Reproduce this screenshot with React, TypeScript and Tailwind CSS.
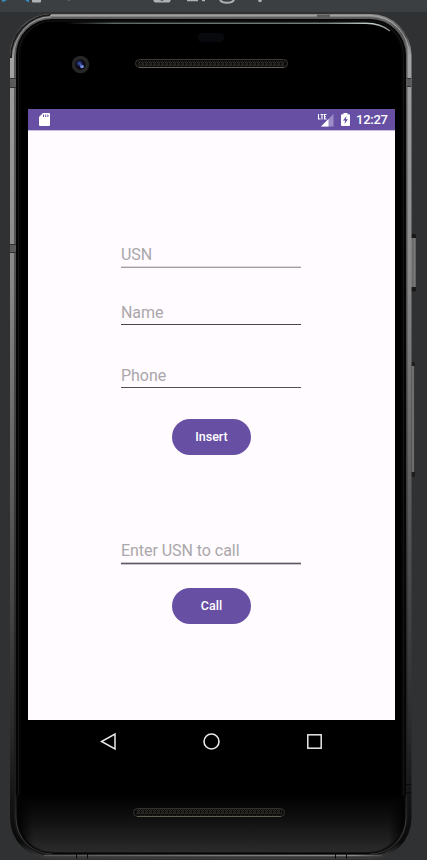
import React from "react";

function PhoneShell() {
  return (
    <svg className="absolute inset-0" width="427" height="860" viewBox="0 0 427 860" fill="none" aria-hidden="true">
      <defs>
        <linearGradient id="metal" x1="0" y1="14" x2="0" y2="859" gradientUnits="userSpaceOnUse">
          <stop offset="0" stopColor="#8c8c8c" />
          <stop offset="0.025" stopColor="#4a4a4a" />
          <stop offset="0.05" stopColor="#a5a5a5" />
          <stop offset="0.1" stopColor="#9c9c9c" />
          <stop offset="0.3" stopColor="#8a8a8a" />
          <stop offset="0.5" stopColor="#686868" />
          <stop offset="0.7" stopColor="#454545" />
          <stop offset="0.85" stopColor="#292929" />
          <stop offset="0.93" stopColor="#141414" />
          <stop offset="0.98" stopColor="#0a0a0a" />
          <stop offset="0.995" stopColor="#333333" />
          <stop offset="1" stopColor="#3a3a3a" />
        </linearGradient>
        <linearGradient id="edge" x1="0" y1="14" x2="0" y2="859" gradientUnits="userSpaceOnUse">
          <stop offset="0" stopColor="#5c5c5c" />
          <stop offset="0.3" stopColor="#525252" />
          <stop offset="0.8" stopColor="#222" />
          <stop offset="1" stopColor="#151515" />
        </linearGradient>
        <linearGradient id="chin" x1="0" y1="795" x2="0" y2="853" gradientUnits="userSpaceOnUse">
          <stop offset="0" stopColor="#000" />
          <stop offset="0.45" stopColor="#111" />
          <stop offset="1" stopColor="#2b2b2b" />
        </linearGradient>
        <linearGradient id="chinSides" x1="18" y1="0" x2="404" y2="0" gradientUnits="userSpaceOnUse">
          <stop offset="0" stopColor="#030303" />
          <stop offset="0.04" stopColor="#030303" stopOpacity="0" />
          <stop offset="0.96" stopColor="#030303" stopOpacity="0" />
          <stop offset="1" stopColor="#030303" />
        </linearGradient>
        <linearGradient id="rim" x1="0" y1="795" x2="0" y2="854" gradientUnits="userSpaceOnUse">
          <stop offset="0" stopColor="#222" />
          <stop offset="0.6" stopColor="#505050" />
          <stop offset="1" stopColor="#3a3a3a" />
        </linearGradient>
        <linearGradient id="shine" x1="65" y1="0" x2="392" y2="0" gradientUnits="userSpaceOnUse">
          <stop offset="0" stopColor="#000" />
          <stop offset="0.15" stopColor="#5c6664" />
          <stop offset="0.8" stopColor="#75807e" />
          <stop offset="0.94" stopColor="#c5d0ce" />
          <stop offset="1" stopColor="#777" />
        </linearGradient>
        <linearGradient id="lip" x1="40" y1="0" x2="390" y2="0" gradientUnits="userSpaceOnUse">
          <stop offset="0" stopColor="#555" />
          <stop offset="0.5" stopColor="#777" />
          <stop offset="0.9" stopColor="#888" />
          <stop offset="1" stopColor="#333" />
        </linearGradient>
        <pattern id="mesh" width="4" height="6" patternUnits="userSpaceOnUse" patternTransform="translate(0 1)">
          <path d="M0.5 0.5L2.5 2.8L0.5 5.2M2.5 0.5L4.5 2.8L2.5 5.2" stroke="#4a4744" strokeWidth="0.8" />
        </pattern>
      </defs>
      {/* side keys */}
      <rect x="411" y="234" width="5" height="57.5" rx="1.5" fill="#181818" />
      <rect x="411" y="238" width="4" height="49" fill="#6c6c6c" />
      <path d="M415.2 238V287" stroke="#a2a2a2" strokeWidth="0.8" />
      <rect x="411" y="362" width="4" height="115" rx="1.5" fill="#1d1d1d" />
      <rect x="411.5" y="366" width="2.800" height="106" fill="#6e6e6e" />
      {/* body */}
      <rect x="10" y="14" width="401.5" height="845" rx="41" fill="url(#metal)" />
      <rect x="14" y="17" width="393.5" height="839" rx="38" fill="url(#edge)" />
      <path d="M11 58A40.500 42 0 0 1 51 15" stroke="#1d1d1d" strokeWidth="2" />
      <path d="M13.5 57A38 40 0 0 1 51 17" stroke="#999" strokeWidth="1" />
      <path d="M50 15.5H370" stroke="#a0a0a0" />
      <path d="M370 15.500A39.500 41 0 0 1 409.500 56" stroke="#a8a8a8" strokeWidth="1" />
      <rect x="16" y="19" width="390" height="835" rx="36" fill="#050505" />
      <path d="M16 795V818A36 36 0 0 0 52 854M406 795V818A36 36 0 0 1 370 854" stroke="url(#rim)" strokeWidth="0.8" />
      <rect x="18.5" y="21" width="385" height="831.500" rx="34" stroke="#141414" strokeWidth="1.2" />
      <rect x="21" y="22" width="380" height="829" rx="32" fill="#000" />
      <path d="M20 795H403V818C403 839 386 852 368 852H54C35 852 20 839 20 818Z" fill="url(#chin)" />
      <path d="M18 795H404V818C404 839 386 852.500 368 852.500H54C35 852.500 18 839 18 818Z" fill="url(#chinSides)" />
      <path d="M44 855.500H382" stroke="url(#lip)" strokeWidth="1.500" />
      <path d="M65 23.2H366C376 23.2 384 26 390 31" stroke="url(#shine)" strokeWidth="1.500" />
      {/* antenna seams */}
      <g fill="#5a5a5a">
        <rect x="10" y="78" width="6" height="10" /><rect x="10" y="244" width="6" height="9" />
        <rect x="406.5" y="78" width="5" height="9" /><rect x="317" y="14.5" width="13" height="4" />
      </g>
      <path d="M10 78.5H16M10 87.5H16M10 244.5H16M10 252.5H16M407 78.5H411M407 86.5H411" stroke="#333" />
      <path d="M406 784.5H411M406 792.5H411M76.5 854V858.5M87.5 854V858.5M335.500 853V858.5M346.5 853V858.5" stroke="#0b0b0b" />
      {/* camera, sensor and speakers */}
      <rect x="198" y="33" width="26" height="9" rx="4" fill="#07090d" />
      <circle cx="80.500" cy="64.5" r="8.700" fill="#282727" />
      <circle cx="80.500" cy="64.5" r="5.200" fill="#0a0b16" />
      <circle cx="79.500" cy="63.5" r="2.800" fill="#202c66" />
      <circle cx="82" cy="66.500" r="1.800" fill="#7f97ee" />
      <path d="M79 63L82 66" stroke="#495fbb" strokeWidth="1.500" />
      <rect x="135.500" y="59.5" width="152" height="8" rx="4" fill="#0b0a09" stroke="#3c3936" />
      <rect x="138" y="60" width="147" height="7" rx="3" fill="url(#mesh)" />
      <path d="M139 67.500H284" stroke="#65605a" />
      <rect x="133.500" y="808.5" width="151" height="8" rx="4" fill="#0b0a09" stroke="#35342f" />
      <g transform="translate(0 808)"><rect x="136" y="1" width="146" height="7" rx="3" fill="url(#mesh)" /></g>
      <path d="M137 816.500H281" stroke="#5e5c51" />
    </svg>
  );
}

function Toolbar() {
  return (
    <header className="h-3 shrink-0 bg-[#3c3f41]">
      <svg width="427" height="12" viewBox="0 0 427 12" fill="none" aria-hidden="true">
        <path d="M2 0H7L2.500 2.300ZM25 0H29V2.500Z" fill="#3592c4" />
        <path d="M32 0H41V1.500Q41 2.500 40 2.500H33Q32 2.500 32 1.500Z" fill="#afb1b3" />
        <path d="M67 0H71L69 1Z" fill="#66696b" />
        <path d="M153.500 0V0.500Q153.500 2.500 155.500 2.500H168.500Q170.500 2.500 170.500 0.500V0" fill="#afb1b3" />
        <path d="M160 0H164L162 1.200Z" fill="#55585a" />
        <path d="M187 0V1.200H198V0M202 0H205V1.200H202Z" fill="#afb1b3" />
        <path d="M220 0C222.500 3.800 231.500 3.800 234 0" stroke="#afb1b3" strokeWidth="2" />
        <circle cx="260" cy="0.500" r="1.800" fill="#afb1b3" />
      </svg>
    </header>
  );
}

function StatusBar() {
  return (
    <div className="flex h-[21px] shrink-0 items-center bg-[#6750a4] pl-[11px] pr-[7px]">
      <svg width="11" height="13" viewBox="0 0 11 13" aria-hidden="true">
        <path d="M4 0H10Q11 0 11 1V12Q11 13 10 13H1Q0 13 0 12V4Z" fill="#fff" />
        <path d="M4.500 1.500V4M6.700 1.500V4M8.900 1.500V4" stroke="#6750a4" />
      </svg>
      <svg className="ml-auto" width="17" height="14" viewBox="0 0 17 14" aria-hidden="true">
        <path d="M16.500 1V13.500H4Z" fill="#9d8dc6" />
        <path d="M11.500 6V13.500H4Z" fill="#fff" />
        <path d="M0 0H9.500V7H0Z" fill="#6750a4" />
        <path d="M1.500 1V6H3.500M3.500 1.500H6.500M5 1.500V6.500M9.500 1.500H7.500V6H9.500M7.500 3.800H9" stroke="#fff" strokeWidth="1.100" fill="none" />
      </svg>
      <svg className="ml-[7px]" width="9" height="13" viewBox="0 0 9 13" aria-hidden="true">
        <path d="M2.500 0H6.500V1.200H8Q9 1.200 9 2.200V12Q9 13 8 13H1Q0 13 0 12V2.200Q0 1.200 1 1.200H2.500Z" fill="#fff" />
        <path d="M5.500 3L2 7.500H4.100L3.500 11L7 6.300H4.900Z" fill="#6750a4" />
      </svg>
      <span className="ml-[6px] w-8 whitespace-nowrap pt-px text-[13px] font-medium leading-[20px] tracking-[-0.25px] text-white">12:27</span>
    </div>
  );
}

function Field({ label, line }: { label: string; line: string }) {
  return (
    <div className="w-[180px]">
      <div className="h-[23px] whitespace-nowrap text-[16px] leading-[23px] tracking-[-0.05px] text-[#aaa7ab]">{label}</div>
      <div className={line} />
    </div>
  );
}

function PillButton({ children }: { children: React.ReactNode }) {
  return (
    <button className="h-9 w-[79px] rounded-full bg-[#6750a4] pt-px text-[12.500px] font-medium text-white">{children}</button>
  );
}

function NavBar() {
  return (
    <nav className="flex h-[43px] shrink-0 items-center justify-between pl-[72px] pr-[72px]">
      <svg width="17" height="19" viewBox="0 0 17 19" fill="none" aria-label="Back">
        <path d="M15 2V17L1.500 9.500Z" stroke="#e8e8e8" strokeWidth="1.500" />
      </svg>
      <svg width="19" height="19" viewBox="0 0 19 19" fill="none" aria-label="Home">
        <circle cx="9.500" cy="9.500" r="7.500" stroke="#e8e8e8" strokeWidth="1.600" />
      </svg>
      <svg width="17" height="17" viewBox="0 0 17 17" fill="none" aria-label="Recents">
        <rect x="1.800" y="1.800" width="13.400" height="13.400" stroke="#e8e8e8" strokeWidth="1.500" />
      </svg>
    </nav>
  );
}

export default function App() {
  return (
    <div className="relative flex h-[860px] w-[427px] flex-col overflow-hidden bg-[#2f3133] font-['Roboto',sans-serif]">
      <Toolbar />
      <PhoneShell />
      <main className="relative ml-7 mt-[97px] flex w-[367px] flex-col">
        <StatusBar />
        <section className="flex h-[590px] flex-col border-t border-[#c9bfe0] bg-[#fffbff] pl-[93px] pt-[112px]">
          <Field label="USN" line="h-[2px] border-b border-[#a29ea3] bg-[#ddd8de]" />
          <div className="mt-[33px]">
            <Field label="Name" line="h-px bg-[#49454f]" />
          </div>
          <div className="mt-[39px]">
            <Field label="Phone" line="h-px bg-[#55515a]" />
          </div>
          <div className="ml-[51px] mt-[31px] flex">
            <PillButton>Insert</PillButton>
          </div>
          <div className="mt-[84px]">
            <Field label="Enter USN to call" line="h-[3px] border-y border-[#c8c4ca] bg-[#5b5661]" />
          </div>
          <div className="ml-[51px] mt-[23px] flex">
            <PillButton>Call</PillButton>
          </div>
        </section>
        <NavBar />
      </main>
    </div>
  );
}
